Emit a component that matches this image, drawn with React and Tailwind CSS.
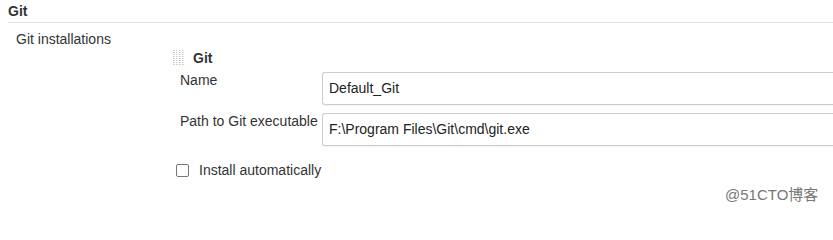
import React from "react";

function DragHandle() {
  // dotted grip
  const dots = [];
  for (let r = 0; r < 8; r++) {
    for (let c = 0; c < 4; c++) {
      dots.push(<rect key={`${r}-${c}`} x={c * 3} y={r * 2} width="1.5" height="1" fill="#c8c8c8" />);
    }
  }
  return (
    <svg width="11" height="16" viewBox="0 0 11 16">
      {dots}
    </svg>
  );
}

function Field({ label, value, top }) {
  return (
    <div className={`flex ${top}`}>
      <div className="w-[149px] shrink-0 whitespace-nowrap pl-[7px] text-[14px] leading-[17px] text-[#333]">{label}</div>
      <div className="flex-1 h-[33px] border border-[#ccc] border-r-0 rounded-l-[3px] shadow-[0_1px_1px_rgba(0,0,0,0.05)] flex items-center pl-[6px] text-[14px] text-[#222]">
        {value}
      </div>
    </div>
  );
}

export default function App() {
  return (
    <div className="w-[833px] h-[210px] bg-white overflow-hidden relative font-['Liberation_Sans',Arial,sans-serif]">
      <div className="ml-2 h-[23px] border-b border-[#e2e2e2] pt-[1px] text-[14px] font-bold text-[#333]">
        Git
      </div>
      <div className="pl-4 pt-[8px] text-[14px] text-[#333] leading-[17px]">Git installations</div>
      <div className="pl-[173px]">
        <div className="flex items-center gap-[9px] h-[18px] mt-[1px]">
          <DragHandle />
          <span className="text-[14px] font-bold text-[#333]">Git</span>
        </div>
        <Field label="Name" value="Default_Git" top="mt-[5px]" />
        <Field label="Path to Git executable" value="F:\Program Files\Git\cmd\git.exe" top="mt-[8px]" />
        <label className="flex items-center gap-[10px] mt-[14px] pl-[3px] text-[14px] text-[#333]">
          <span className="w-[13px] h-[13px] border border-[#777] rounded-[2px] bg-white inline-block" />
          Install automatically
        </label>
      </div>
      <div className="absolute left-[725px] top-[184px] text-[15px] text-[#777] font-['Liberation_Sans','Noto_Sans_CJK_SC',sans-serif]">
        @51CTO博客
      </div>
    </div>
  );
}
